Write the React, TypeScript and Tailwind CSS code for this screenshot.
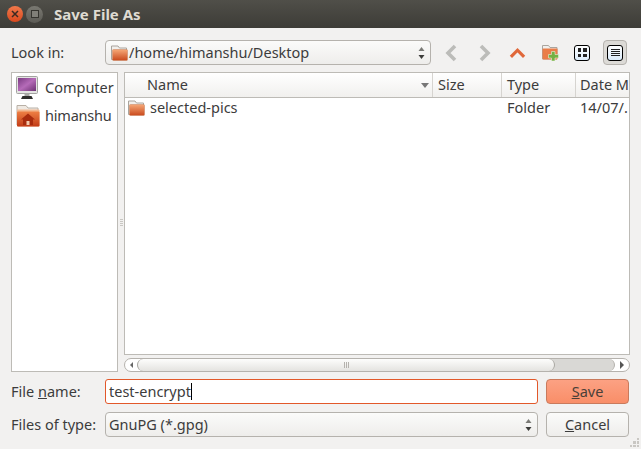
import React from 'react';

const font = { fontFamily: '"Noto Sans", "Open Sans", sans-serif' };

function Folder({ id }: { id: string }) {
  return (
    <svg viewBox="0 0 17 16" className="w-[17px] h-[16px] shrink-0">
      <path d="M0.500 14.500V1h6.500l1.500 2h7v11.500z" fill="#f1efec" stroke="#aaa59e" strokeWidth="1" />
      <defs>
        <linearGradient id={id} x1="0" y1="0" x2="0" y2="1">
          <stop offset="0" stopColor="#f6a877" />
          <stop offset="1" stopColor="#c9491c" />
        </linearGradient>
      </defs>
      <rect x="1.500" y="4.500" width="15" height="11" rx="1" fill={`url(#${id})`} stroke="#c9805a" strokeWidth="0.500" />
    </svg>
  );
}

function Computer() {
  return (
    <svg viewBox="0 0 22 24" className="w-[22px] h-[24px] shrink-0">
      <defs>
        <linearGradient id="scr" x1="0" y1="0" x2="1" y2="1">
          <stop offset="0" stopColor="#7a3a82" />
          <stop offset="0.500" stopColor="#b56bb8" />
          <stop offset="1" stopColor="#6d3173" />
        </linearGradient>
      </defs>
      <rect x="0.500" y="0.500" width="21" height="17" rx="1" fill="#e4e4e2" stroke="#a3a3a0" />
      <rect x="2" y="2" width="18" height="13" fill="url(#scr)" />
      <rect x="8.500" y="17.500" width="5" height="2.500" fill="#a9a9a6" />
      <path d="M5 23l1.500-3h9l1.500 3z" fill="#2e2e2c" />
    </svg>
  );
}

function HomeFolder() {
  return (
    <svg viewBox="0 0 24 23" className="w-[24px] h-[23px] shrink-0">
      <defs>
        <linearGradient id="hf" x1="0" y1="0" x2="0" y2="1">
          <stop offset="0" stopColor="#ee7f44" />
          <stop offset="1" stopColor="#c23c17" />
        </linearGradient>
      </defs>
      <path d="M1 21V1.500h9l2 2.500h10v17z" fill="#efe9e2" stroke="#b8b0a6" />
      <rect x="1" y="5.500" width="22.500" height="17" rx="1" fill="#f2b891" />
      <rect x="1" y="7.500" width="22.500" height="15" rx="1" fill="url(#hf)" />
      <path d="M12 9.500l7 6h-2V21H7v-5.500H5z" fill="#a92c0e" />
      <rect x="10.500" y="17" width="3" height="4" fill="#f4c9ac" />
    </svg>
  );
}

function UpDown() {
  return (
    <svg viewBox="0 0 7 14" className="w-[7px] h-[14px] shrink-0">
      <path d="M3.500 1L6.500 5H0.500z" fill="#7a7a76" />
      <path d="M3.500 13L6.500 9H0.500z" fill="#3c3c3a" />
    </svg>
  );
}

function ToolbarIcons() {
  return (
    <div className="flex items-center ml-[13px] h-[25px]">
      <svg viewBox="0 0 14 18" className="w-[14px] h-[18px]">
        <path d="M11 2L4 9l7 7" fill="none" stroke="#bcbcb9" strokeWidth="3.600" />
      </svg>
      <svg viewBox="0 0 14 18" className="w-[14px] h-[18px] ml-[20px]">
        <path d="M3 2l7 7-7 7" fill="none" stroke="#bcbcb9" strokeWidth="3.600" />
      </svg>
      <svg viewBox="0 0 18 12" className="w-[17px] h-[12px] ml-[17px]">
        <path d="M2 10l7-7 7 7" fill="none" stroke="#e0683a" strokeWidth="3.400" />
      </svg>
      <svg viewBox="0 0 17 16" className="w-[17px] h-[16px] ml-[16px]">
        <path d="M0.500 14V0.500h6l1.500 2h7V14z" fill="#f1efec" stroke="#aaa59e" />
        <rect x="0.500" y="3.500" width="15" height="11" rx="1" fill="#ea7d48" />
        <path d="M9.500 6.500h3.500v3h3.500V13H13v3H9.500v-3H6.500V9.500h3z" fill="#75b043" stroke="#e8f3dc" strokeWidth="0.600" />
      </svg>
      <div className="ml-[15px] w-[16px] h-[16px] rounded-[3px] border-[1.500px] border-black bg-gradient-to-b from-white to-[#dcecfb] grid grid-cols-2 gap-[2px] p-[2.500px]">
        <span className="bg-[#222]" />
        <span className="bg-[#222]" />
        <span className="bg-[#222]" />
        <span className="bg-[#222]" />
      </div>
      <div className="ml-[13px] w-[24px] h-[25px] rounded-[4px] border border-[#b5b2ad] bg-[#dcdad6] flex items-center justify-center">
        <div className="w-[16px] h-[16px] rounded-[3px] border-[1.500px] border-black bg-gradient-to-b from-white to-[#dcecfb] flex flex-col justify-center gap-[1px] px-[2.500px]">
          <span className="h-px bg-[#222]" />
          <span className="h-px bg-[#222]" />
          <span className="h-px bg-[#222]" />
          <span className="h-px bg-[#222]" />
        </div>
      </div>
    </div>
  );
}

function HeaderCell({ label, className }: { label: string; className: string }) {
  return (
    <div className={`h-full flex items-center border-r border-[#d6d4d0] ${className}`}>
      {label}
    </div>
  );
}

export default function App() {
  return (
    <div className="w-[641px] h-[449px] bg-[#f2f1f0] flex flex-col text-[14.500px] text-[#3c3c3c] overflow-hidden relative" style={font}>
      <div className="h-[28px] shrink-0 bg-gradient-to-b from-[#504f49] to-[#3d3c37] flex items-center pl-[7px]">
        <div className="w-[16px] h-[16px] rounded-full bg-gradient-to-b from-[#f0784a] to-[#d9481c] flex items-center justify-center">
          <svg viewBox="0 0 8 8" className="w-[8px] h-[8px]">
            <path d="M1 1l6 6M7 1l-6 6" stroke="#3b2a22" strokeWidth="1.500" />
          </svg>
        </div>
        <div className="ml-[3px] w-[17px] h-[17px] rounded-full bg-gradient-to-b from-[#7a7972] to-[#5c5b55] flex items-center justify-center">
          <div className="w-[8px] h-[8px] border border-[#35342f] bg-[#807f78]" />
        </div>
        <span className="ml-[11px] text-[15px] font-bold text-[#dfdbd2]">Save File As</span>
      </div>

      <div className="flex-1 flex flex-col pl-[11px] pr-[11px] pt-[12px] min-h-0">
        <div className="flex items-center h-[25px] shrink-0">
          <span className="w-[94px]">Look in:</span>
          <div className="w-[326px] h-[25px] rounded-[4px] border border-[#b5b2ad] bg-gradient-to-b from-[#fbfbfa] to-[#eeedeb] flex items-center pl-[5px] pr-[5px]">
            <Folder id="f1" />
            <span className="ml-[1px] flex-1 text-[#3c3c3c]">/home/himanshu/Desktop</span>
            <UpDown />
          </div>
          <ToolbarIcons />
        </div>

        <div className="flex mt-[7px] h-[300px] shrink-0">
          <div className="w-[107px] border border-[#bdbbb6] bg-white flex flex-col pl-[4px] pt-[2px] gap-[3px]">
            <div className="flex items-center h-[25px]">
              <Computer />
              <span className="ml-[7px]">Computer</span>
            </div>
            <div className="flex items-center h-[25px]">
              <HomeFolder />
              <span className="ml-[5px] tracking-[-0.2px]">himanshu</span>
            </div>
          </div>

          <div className="w-[6px] flex flex-col items-center justify-center gap-[1px]">
            <span className="w-[3px] h-px bg-[#c9c7c3]" />
            <span className="w-[3px] h-px bg-[#c9c7c3]" />
            <span className="w-[3px] h-px bg-[#c9c7c3]" />
            <span className="w-[3px] h-px bg-[#c9c7c3]" />
          </div>

          <div className="w-[506px] flex flex-col">
            <div className="h-[283px] border border-[#bdbbb6] bg-white flex flex-col">
              <div className="h-[25px] shrink-0 flex items-center border-b border-[#bdbbb6] bg-gradient-to-b from-[#ffffff] to-[#f1f0ee] overflow-hidden">
                <div className="w-[308px] h-full flex items-center pl-[22px] border-r border-[#d6d4d0] relative">
                  Name
                  <span className="absolute right-[3px] top-[10px] w-0 h-0 border-x-[4px] border-x-transparent border-t-[5px] border-t-[#777]" />
                </div>
                <HeaderCell label="Size" className="w-[69px] pl-[5px]" />
                <HeaderCell label="Type" className="w-[74px] pl-[5px]" />
                <div className="pl-[4px] whitespace-nowrap">Date M</div>
              </div>
              <div className="h-[20px] flex items-center overflow-hidden relative whitespace-nowrap">
                <div className="w-[308px] flex items-center pl-[3px]">
                  <Folder id="f2" />
                  <span className="ml-[5px]">selected-pics</span>
                </div>
                <div className="w-[69px]" />
                <div className="w-[74px] pl-[5px]">Folder</div>
                <div className="pl-[4px]">14/07/.</div>
              </div>
            </div>

            <div className="mt-[3px] h-[14px] rounded-full border border-[#b5b2ad] bg-white flex items-center overflow-hidden">
              <div className="w-[12px] flex justify-center">
                <span className="w-0 h-0 border-y-[3px] border-y-transparent border-r-[3px] border-r-[#666]" />
              </div>
              <div className="flex-1 h-full bg-[#d9d8d5] rounded-full border-r border-[#b5b2ad] flex">
                <div className="w-[418px] h-full bg-gradient-to-b from-[#fdfdfc] to-[#e4e3e0] rounded-full border-x border-[#aaa8a3] flex items-center justify-center gap-[1px]">
                  <span className="w-px h-[6px] bg-[#b5b2ad]" />
                  <span className="w-px h-[6px] bg-[#b5b2ad]" />
                  <span className="w-px h-[6px] bg-[#b5b2ad]" />
                </div>
              </div>
              <div className="w-[14px] flex justify-center">
                <span className="w-0 h-0 border-y-[4px] border-y-transparent border-l-[4px] border-l-[#555]" />
              </div>
            </div>
          </div>
        </div>

        <div className="flex items-center mt-[7px] h-[25px] shrink-0">
          <span className="w-[94px]">File <span className="underline">n</span>ame:</span>
          <div className="w-[433px] h-[25px] rounded-[3px] border border-[#e2582a] bg-white flex items-center pl-[3px]">
            <span>test-encrypt</span>
            <span className="w-px h-[17px] bg-black" />
          </div>
          <button className="ml-[8px] w-[83px] h-[25px] rounded-[4px] border border-[#c97a5c] bg-gradient-to-b from-[#fca183] to-[#f98e68] text-[#4a4038]" style={font}>
            <span className="underline">S</span>ave
          </button>
        </div>

        <div className="flex items-center mt-[8px] h-[25px] shrink-0">
          <span className="w-[94px]">Files of type:</span>
          <div className="w-[433px] h-[25px] rounded-[4px] border border-[#b5b2ad] bg-gradient-to-b from-[#fbfbfa] to-[#eeedeb] flex items-center pl-[3px] pr-[5px]">
            <span className="flex-1">GnuPG (*.gpg)</span>
            <UpDown />
          </div>
          <button className="ml-[8px] w-[83px] h-[25px] rounded-[4px] border border-[#b5b2ad] bg-gradient-to-b from-[#fbfbfa] to-[#eeedeb]" style={font}>
            <span className="underline">C</span>ancel
          </button>
        </div>
      </div>

      <div className="absolute right-[2px] bottom-[2px] w-[9px] h-[9px] grid grid-cols-3 gap-[1px]">
        <span />
        <span />
        <span className="bg-[#c9c7c3]" />
        <span />
        <span className="bg-[#c9c7c3]" />
        <span className="bg-[#c9c7c3]" />
        <span className="bg-[#c9c7c3]" />
        <span className="bg-[#c9c7c3]" />
        <span className="bg-[#c9c7c3]" />
      </div>
    </div>
  );
}
